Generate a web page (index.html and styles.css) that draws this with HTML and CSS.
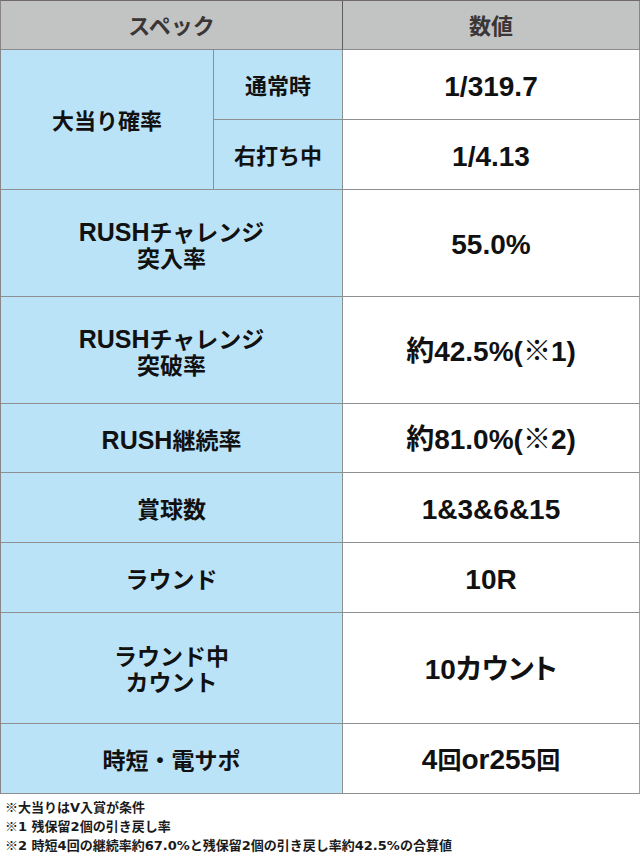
FILE: index.html
```html
<!DOCTYPE html>
<html lang="ja">
<head>
<meta charset="utf-8">
<title>スペック</title>
<link rel="stylesheet" href="styles.css">
</head>
<body>
<div class="spec">
  <div class="cell head head-label"><span>スペック</span></div>
  <div class="cell head head-value"><span>数値</span></div>

  <div class="cell label group"><span>大当り確率</span></div>
  <div class="cell label sub"><span>通常時</span></div>
  <div class="cell value"><span>1/319.7</span></div>
  <div class="cell label sub"><span>右打ち中</span></div>
  <div class="cell value"><span>1/4.13</span></div>

  <div class="cell label wide"><span><span class="latin">RUSH</span>チャレンジ<br>突入率</span></div>
  <div class="cell value"><span>55.0%</span></div>

  <div class="cell label wide"><span><span class="latin">RUSH</span>チャレンジ<br>突破率</span></div>
  <div class="cell value"><span>約42.5%(※1)</span></div>

  <div class="cell label wide"><span><span class="latin">RUSH</span>継続率</span></div>
  <div class="cell value"><span>約81.0%(※2)</span></div>

  <div class="cell label wide"><span>賞球数</span></div>
  <div class="cell value"><span>1&amp;3&amp;6&amp;15</span></div>

  <div class="cell label wide"><span>ラウンド</span></div>
  <div class="cell value"><span>10R</span></div>

  <div class="cell label wide"><span>ラウンド中<br>カウント</span></div>
  <div class="cell value"><span>10カウント</span></div>

  <div class="cell label wide"><span>時短・電サポ</span></div>
  <div class="cell value"><span>4<span class="kanji">回</span>or255<span class="kanji">回</span></span></div>
</div>
<div class="notes">
  <p><span class="mark">※</span>大当りはV入賞が条件</p>
  <p><span class="mark">※</span>1 残保留2個の引き戻し率</p>
  <p><span class="mark">※</span>2 時短4回の継続率約67.0%と残保留2個の引き戻し率約42.5%の合算値</p>
</div>
</body>
</html>
```
FILE: styles.css
```css
html, body {
  margin: 0;
  padding: 0;
  background: #ffffff;
}

body {
  width: 640px;
  font-family: "Liberation Sans", "Noto Sans CJK JP", sans-serif;
  font-weight: bold;
  color: #111111;
}

.spec {
  display: grid;
  grid-template-columns: 213px 129px 297px;
  grid-template-rows: 49px 70px 70px 107px 107px 69px 70px 70px 111px 70px;
  width: 640px;
  box-sizing: border-box;
  border-top: 1px solid #6f6a68;
  border-left: 1px solid #8a8686;
}

.cell {
  box-sizing: border-box;
  display: flex;
  align-items: center;
  justify-content: center;
  text-align: center;
  border-right: 1px solid #8e8f90;
  border-bottom: 1px solid #8e8f90;
  padding-top: 4px;
}

.head {
  background: #c2c3c3;
  color: #3a3635;
  font-size: 22px;
  line-height: 26px;
  padding-top: 3px;
  border-bottom-color: #8a8b8c;
}

.head-label {
  grid-column: 1 / 3;
  border-right-color: #5e5a59;
}

.head-value {
  border-right-color: #8a8686;
}

.label {
  background: #bbe3f8;
  font-size: 22px;
  line-height: 26px;
}

.wide {
  grid-column: 1 / 3;
  font-size: 23px;
}

.latin {
  font-size: 25px;
}

.group {
  grid-row: 2 / 4;
}

.value {
  background: #ffffff;
  font-size: 28px;
  line-height: 30px;
  font-feature-settings: "palt";
  border-right-color: #a0a0a0;
}

.value .kanji {
  font-size: 24px;
}

.notes {
  padding: 4px 0 0 5px;
  font-family: "DejaVu Sans", "Noto Sans CJK JP", sans-serif;
  font-size: 13px;
  line-height: 18px;
  color: #1a1a1a;
}

.notes .mark {
  font-family: "Noto Sans CJK JP", sans-serif;
}

.notes p {
  margin: 0;
}
```
